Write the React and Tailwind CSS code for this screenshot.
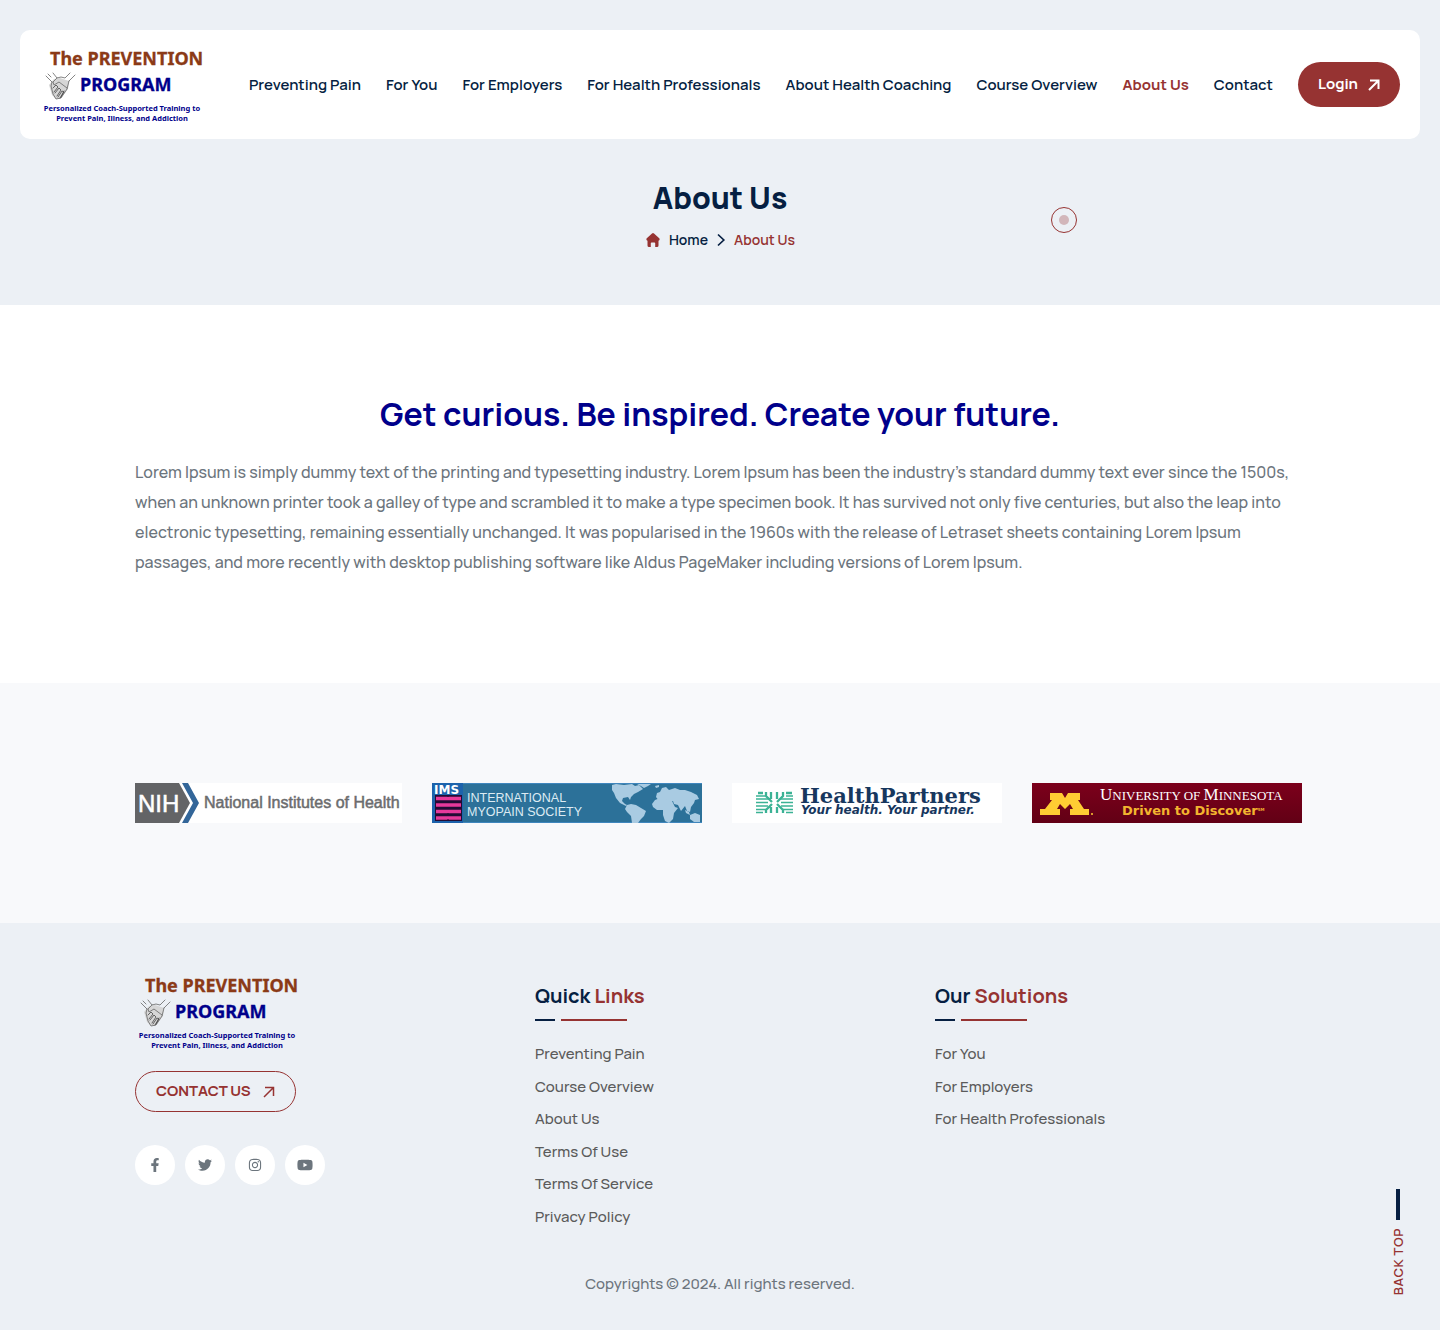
import { FaFacebookF, FaTwitter, FaInstagram, FaYoutube } from "react-icons/fa";

const navItems = [
  "Preventing Pain",
  "For You",
  "For Employers",
  "For Health Professionals",
  "About Health Coaching",
  "Course Overview",
  "About Us",
  "Contact",
];

const quickLinks = [
  "Preventing Pain",
  "Course Overview",
  "About Us",
  "Terms Of Use",
  "Terms Of Service",
  "Privacy Policy",
];

const solutions = ["For You", "For Employers", "For Health Professionals"];

const socials = [
  { name: "Facebook", Icon: FaFacebookF, size: 14 },
  { name: "Twitter", Icon: FaTwitter, size: 14 },
  { name: "Instagram", Icon: FaInstagram, size: 14 },
  { name: "YouTube", Icon: FaYoutube, size: 16 },
];

function Logo() {
  return (
    <svg width="166" height="77" viewBox="0 0 166 77" role="img" aria-label="The Prevention Program">
      <g fontFamily="'Noto Sans', sans-serif" fontWeight="700">
        <text x="10" y="19" fontSize="18" fill="#8b3a17" stroke="#8b3a17" strokeWidth="0.3">The PREVENTION</text>
        <text x="40" y="45" fontSize="18" fill="#00008b" stroke="#00008b" strokeWidth="0.3">PROGRAM</text>
        <g fontSize="7.500" textAnchor="middle" fill="#00008b">
          <text x="82" y="65">Personalized Coach-Supported Training to</text>
          <text x="82" y="75">Prevent Pain, Illness, and Addiction</text>
        </g>
      </g>
      <path d="M14 33l6-1 9 3-1 8-7 9-5 1-4-4-3-10z" fill="#d6d6d6" />
      <g fill="none" stroke="#666" strokeWidth="0.8" strokeLinecap="round" strokeLinejoin="round">
        <path d="M6 30l6 6M13 27l4 5 4-1 4 1 5-5M35 29l-6 6M8 28l3 3" />
        <path d="M12 36l-1 4 2 8 3 5 5-1 6-9 2-8M17 32l-4 4 1 3 5-3 8 6" />
        <path d="M13 42l3-3 2 2-4 5M15 47l4-5 2 2-4 6M18 51l4-6 2 1-4 6M24 45l-3 6" stroke="#444" />
      </g>
    </svg>
  );
}

function ArrowUpRight({ bold }) {
  return (
    <svg width="12" height="12" viewBox="0 0 12 12" fill="none" stroke="currentColor" strokeWidth={bold ? 2 : 1.5} aria-hidden="true">
      <path d="M1 11L10.500 1.500M2 1.500H10.500V10" />
    </svg>
  );
}

function NihLogo() {
  return (
    <svg className="w-full max-w-[267px] min-w-0" viewBox="0 0 267 40" role="img" aria-label="National Institutes of Health">
      <rect width="267" height="40" fill="#fff" />
      <path d="M0 0H44L55 20L44 40H0Z" fill="#636466" />
      <path d="M47 0H53L64 20L53 40H47L58 20Z" fill="#336699" />
      <g fontFamily="'Liberation Sans', Arial, sans-serif">
        <text x="3" y="29" fontSize="24" fill="#fff" stroke="#fff" strokeWidth="0.5">NIH</text>
        <text x="69" y="25" fontSize="16" fill="#6b6c6e" stroke="#6b6c6e" strokeWidth="0.5">
          National Institutes of Health
        </text>
      </g>
    </svg>
  );
}

function ImsLogo() {
  return (
    <svg className="w-full max-w-[270px] min-w-0" viewBox="0 0 270 40" role="img" aria-label="International Myopain Society">
      <rect width="270" height="40" fill="#2c7199" />
      <path d="M0 .5H270M0 39.500H270" stroke="#3f86bd" />
      <rect width="31" height="40" fill="#1c63ac" />
      <rect x="3" y="12" width="27" height="26" fill="#220c35" />
      <path d="M4 15.500H29M4 22H29M4 28.500H29M4 35H29" stroke="#e6399b" strokeWidth="3.500" />
      <path d="M16 12V38" stroke="#220c35" strokeWidth="1" strokeDasharray="2 4" />
      <text x="2" y="11" fontSize="12" fontWeight="700" fontFamily="'DejaVu Sans', sans-serif" fill="#fff">IMS</text>
      <g fontFamily="'Liberation Sans', Arial, sans-serif" fill="#dcebf3" fontSize="12.500">
        <text x="35" y="19">INTERNATIONAL</text>
        <text x="35" y="33">MYOPAIN SOCIETY</text>
      </g>
      <g fill="#a9cbe2">
        <path d="M180 2l4-1 8 1 8-1 3 2 4-1 4 4-5 3-4 2-3 3-1 3-2-3-5 1-1 3 3 3 2 1-1 1-6-3-4-5-2-5-2-3z" />
        <path d="M205 1h14l-3 2-4 2-3-2zM223 3l4-1v2l-3 1z" />
        <path d="M195 22l4-1 5 1 5 3 5 3-2 5-3 3-3 4h-6l-1-7-4-4-2-3z" />
        <path d="M223 17l5-2 6 1 6 2 3 6 3 1-4 5-1 6-4 4-4-2-2-6 0-5-6 0-4-3-1-3z" />
        <path d="M224 14l1-4 3-1 2-4 4-1 3 3 6-2 5 2 5 0 6 2 6 3 2 4-4 1-1 3-3 4-1 5-3-1-2-5-4 5-3-6-4-1-1-3-4 1-4-3-3 0-3 2z" />
        <path d="M253 27l4 2 1 3-4-2zM258 32l5-2 5 2 0 7-6 0-4-3z" />
      </g>
    </svg>
  );
}

function HealthPartnersLogo() {
  return (
    <svg className="w-full max-w-[270px] min-w-0" viewBox="0 0 270 40" role="img" aria-label="HealthPartners: Your health. Your partner.">
      <rect width="270" height="40" fill="#fff" />
      <g stroke="#3bb295" strokeWidth="1.700" fill="none">
        <path d="M24 13H33M24 16H38M24 19.500H36M24 23H36M24 26.500H35M24 29.500H31" />
        <path d="M54 13H61M48 16H61M49 19.500H61M49 23H61M50 26.500H61M54 29.500H61" />
        <path d="M26 10H31M54 10H60M34 9V13L40 19M39 9V16M45 9V16M51 9V13L45 19M34 30V27L40 21M39 30V24M45 30V24M51 30V27L45 21" strokeWidth="2.300" />
      </g>
      <g fill="#17375e">
        <text x="68" y="20" fontSize="21" fontWeight="700" fontFamily="'DejaVu Serif', serif">HealthPartners</text>
        <text x="69" y="31" fontSize="12" fontWeight="700" fontStyle="italic" fontFamily="'DejaVu Sans', sans-serif">Your health. Your partner.</text>
      </g>
    </svg>
  );
}

function MinnesotaLogo() {
  return (
    <svg className="w-full max-w-[270px] min-w-0" viewBox="0 0 270 40" role="img" aria-label="University of Minnesota: Driven to Discover">
      <defs>
        <linearGradient id="maroon" x1="0" y1="0" x2="0" y2="1">
          <stop offset="0" stopColor="#7c001b" />
          <stop offset="1" stopColor="#620015" />
        </linearGradient>
      </defs>
      <rect width="270" height="40" fill="url(#maroon)" />
      <path d="M18 10H30L33 15L36 10H48V17H46L52 26H57V32H38V26H41L38 21L33 26L28 21L25 26H28V32H8V26H13L20 17H18Z" fill="#ffcc33" />
      <circle cx="60" cy="31" r="1" fill="#ffcc33" />
      <g fontFamily="'Liberation Serif', 'Times New Roman', serif" fill="#fff" fontSize="13">
        <text x="68" y="17">
          <tspan fontSize="17">U</tspan>NIVERSITY OF <tspan fontSize="17">M</tspan>INNESOTA
        </text>
      </g>
      <text x="90" y="32" fontSize="13" fontWeight="700" fontFamily="'DejaVu Sans', sans-serif" fill="#f3b52f">
        Driven to Discover<tspan fontSize="4" dy="-4">SM</tspan>
      </text>
    </svg>
  );
}

function FooterColumn({ first, second, links }) {
  return (
    <nav className="px-[15px] pt-15" aria-label={`${first} ${second}`}>
      <h2 className="text-xl leading-[26px] font-bold text-[#061f42]">
        {first} <span className="text-[#963332]">{second}</span>
      </h2>
      <div className="mt-2.5 flex gap-1.5">
        <span className="h-0.5 w-5 bg-[#061f42]" />
        <span className="h-0.5 w-[66px] bg-[#963332]" />
      </div>
      <ul className="mt-[22px] flex flex-col gap-2.5 text-[15px] leading-normal font-medium text-[#5b5b5b]">
        {links.map((item) => (
          <li key={item}>
            <a href="#">{item}</a>
          </li>
        ))}
      </ul>
    </nav>
  );
}

export default function App() {
  return (
    <div className="relative bg-white font-['Manrope','Inter',sans-serif]">
      <header className="bg-[#ecf0f5] px-5 pt-[30px] pb-[53px]">
        <div className="flex items-center justify-between rounded-[10px] bg-white px-5 py-4">
          <a href="#" className="shrink-0"><Logo /></a>
          <div className="flex items-center gap-[25px]">
            <nav aria-label="Main">
              <ul className="flex items-center gap-[25px] text-[15px] leading-6">
                {navItems.map((item) => (
                  <li key={item}>
                    <a
                      href="#"
                      className={
                        item === "About Us"
                          ? "font-bold whitespace-nowrap text-[#963332]"
                          : "font-semibold whitespace-nowrap text-[#061f42]"
                      }
                    >
                      {item}
                    </a>
                  </li>
                ))}
              </ul>
            </nav>
            <a href="#" className="flex h-[45px] items-center gap-2.5 rounded-full bg-[#963332] px-5 text-[15px] font-bold text-white">
              Login <ArrowUpRight bold />
            </a>
          </div>
        </div>
        <div className="pt-[39px] text-center">
          <h1 className="text-[30px] leading-10 font-extrabold text-[#061f42]">About Us</h1>
          <nav aria-label="Breadcrumb" className="mt-2.5 flex items-center justify-center gap-2 text-sm leading-6 font-semibold">
            <svg width="16" height="16" viewBox="0 0 16 16" fill="#963332" aria-hidden="true">
              <path d="M7 1.500Q8 .6 9 1.500L14.500 6.500Q15.200 8.500 13.500 8.800V13.500Q13.500 15 12 15H10.200V11.200Q10.200 10.400 9.400 10.400H6.600Q5.800 10.400 5.800 11.200V15H4Q2.500 15 2.500 13.500V8.800Q.8 8.500 1.500 6.500Z" />
            </svg>
            <a href="#" className="text-[#061f42]">Home</a>
            <svg width="10" height="14" viewBox="0 0 10 14" fill="none" stroke="#061f42" strokeWidth="1.700" aria-hidden="true">
              <path d="M2 1.500L7.800 7L2 12.500" />
            </svg>
            <span className="text-[#963332]">About Us</span>
          </nav>
        </div>
      </header>

      <main>
        <section className="mx-auto max-w-[1200px] px-[15px] pt-[88px] pb-[106px]">
          <h2 className="text-center text-[32px] leading-[42px] font-bold text-[#00008b]">
            Get curious. Be inspired. Create your future.
          </h2>
          <p className="mt-[22px] text-base leading-[30px] font-medium text-[#6c757d]">
            Lorem Ipsum is simply dummy text of the printing and typesetting industry. Lorem Ipsum has been the industry’s standard dummy text ever since the 1500s,
            when an unknown printer took a galley of type and scrambled it to make a type specimen book. It has survived not only five centuries, but also the leap into
            electronic typesetting, remaining essentially unchanged. It was popularised in the 1960s with the release of Letraset sheets containing Lorem Ipsum
            passages, and more recently with desktop publishing software like Aldus PageMaker including versions of Lorem Ipsum.
          </p>
        </section>

        <section className="bg-[#f8f9fb] py-[100px]" aria-label="Partners">
          <div className="mx-auto flex max-w-[1200px] gap-[30px] px-[15px]">
            <NihLogo />
            <ImsLogo />
            <HealthPartnersLogo />
            <MinnesotaLogo />
          </div>
        </section>
      </main>

      <footer className="bg-[#ecf0f5] pb-[34px]">
        <div className="mx-auto grid max-w-[1200px] grid-cols-3">
          <div className="px-[15px] pt-[50px]">
            <a href="#" className="block"><Logo /></a>
            <a href="#" className="mt-[21px] inline-flex h-[41px] items-center gap-3 rounded-full border border-[#963332] px-5 text-[15px] font-bold text-[#963332]">
              CONTACT US <ArrowUpRight />
            </a>
            <div className="mt-[33px] flex gap-2.5">
              {socials.map(({ name, Icon, size }) => (
                <a key={name} href="#" aria-label={name} className="flex size-10 items-center justify-center rounded-full bg-white text-[#6c757d]">
                  <Icon size={size} />
                </a>
              ))}
            </div>
          </div>
          <FooterColumn first="Quick" second="Links" links={quickLinks} />
          <FooterColumn first="Our" second="Solutions" links={solutions} />
        </div>
        <p className="mt-11 text-center text-[15px] leading-6 font-medium text-[#6c757d]">Copyrights © 2024. All rights reserved.</p>
      </footer>

      <div className="pointer-events-none absolute top-[207px] left-[1051px] flex size-[26px] items-center justify-center rounded-full border border-[#963332]">
        <span className="size-2.5 rounded-full bg-[#963332]/30" />
      </div>
      <a href="#" className="absolute right-[34px] bottom-[35px] flex flex-col items-center gap-2">
        <span className="h-[31px] w-1 bg-[#061f42]" />
        <span className="rotate-180 text-[13px] leading-4 font-semibold tracking-wider text-[#963332] [writing-mode:vertical-rl]">BACK TOP</span>
      </a>
    </div>
  );
}
